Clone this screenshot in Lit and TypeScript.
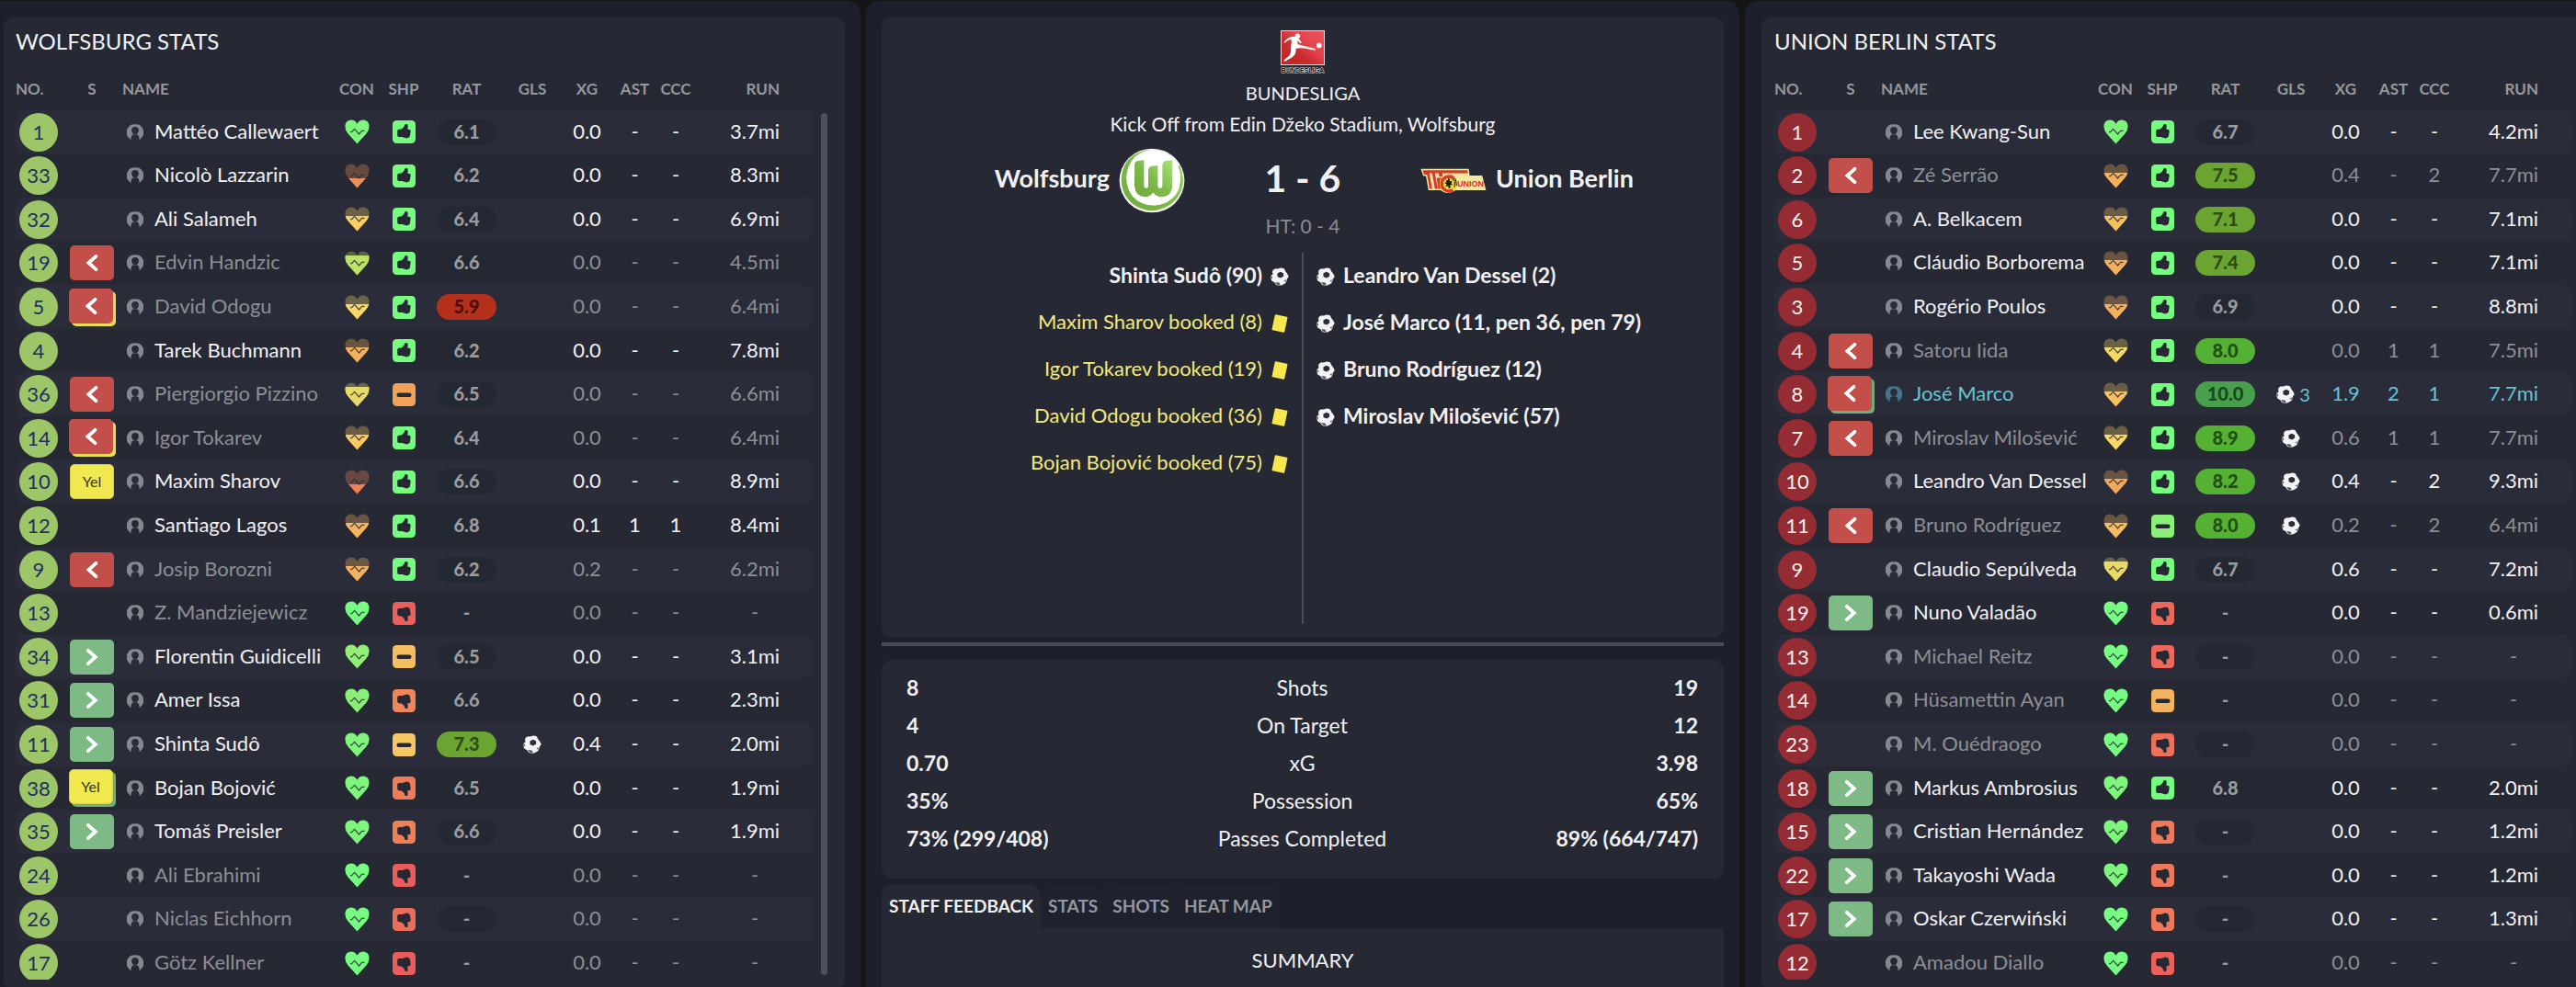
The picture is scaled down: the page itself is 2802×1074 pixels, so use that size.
import { LitElement, html, css, svg, nothing } from "lit";
import { customElement, property, state } from "lit/decorators.js";
import { classMap } from "lit/directives/class-map.js";

type Mark = "" | "off" | "on" | "yel" | "off-yel" | "off-on" | "yel-on";
type Shape = "up" | "flat" | "down";

interface Player {
  no: number;
  mark: Mark;
  name: string;
  heart: string;
  drained: number;
  shape: Shape;
  shapeColor: string;
  rating: string;
  goals: number;
  xg: string;
  assists: string;
  chances: string;
  run: string;
  tone: string;
}

const GREEN = "#76fc7e";

function player(
  no: number, mark: Mark, name: string, heart: string, drained: number,
  shape: Shape, shapeColor: string, rating: string, goals: number,
  xg: string, assists: string, chances: string, run: string, tone = "",
): Player {
  return { no, mark, name, heart, drained, shape, shapeColor, rating, goals, xg, assists, chances, run, tone };
}

const WOLFSBURG: Player[] = [
  player(1, "", "Mattéo Callewaert", "#7ef57c", 0, "up", GREEN, "6.1", 0, "0.0", "-", "-", "3.7mi"),
  player(33, "", "Nicolò Lazzarin", "#f09058", 16, "up", GREEN, "6.2", 0, "0.0", "-", "-", "8.3mi"),
  player(32, "", "Ali Salameh", "#f8cf60", 10, "up", GREEN, "6.4", 0, "0.0", "-", "-", "6.9mi"),
  player(19, "off", "Edvin Handzic", "#bde268", 5, "up", GREEN, "6.6", 0, "0.0", "-", "-", "4.5mi", "dim"),
  player(5, "off-yel", "David Odogu", "#f8d764", 10, "up", GREEN, "5.9", 0, "0.0", "-", "-", "6.4mi", "dim"),
  player(4, "", "Tarek Buchmann", "#f5b05c", 10, "up", GREEN, "6.2", 0, "0.0", "-", "-", "7.8mi"),
  player(36, "off", "Piergiorgio Pizzino", "#e9da66", 5, "flat", "#f1a258", "6.5", 0, "0.0", "-", "-", "6.6mi", "dim"),
  player(14, "off-yel", "Igor Tokarev", "#f8cb62", 10, "up", GREEN, "6.4", 0, "0.0", "-", "-", "6.4mi", "dim"),
  player(10, "yel", "Maxim Sharov", "#f0815a", 16, "up", GREEN, "6.6", 0, "0.0", "-", "-", "8.9mi"),
  player(12, "", "Santiago Lagos", "#f5b45e", 10, "up", GREEN, "6.8", 0, "0.1", "1", "1", "8.4mi"),
  player(9, "off", "Josip Borozni", "#f3b15e", 10, "up", GREEN, "6.2", 0, "0.2", "-", "-", "6.2mi", "dim"),
  player(13, "", "Z. Mandziejewicz", "#76fc80", 0, "down", "#ec605a", "-", 0, "0.0", "-", "-", "-", "dim"),
  player(34, "on", "Florentin Guidicelli", "#93ee75", 0, "flat", "#f4c05f", "6.5", 0, "0.0", "-", "-", "3.1mi"),
  player(31, "on", "Amer Issa", "#8aef76", 0, "down", "#ee865a", "6.6", 0, "0.0", "-", "-", "2.3mi"),
  player(11, "on", "Shinta Sudô", "#80f47c", 0, "flat", "#f6c863", "7.3", 1, "0.4", "-", "-", "2.0mi"),
  player(38, "yel-on", "Bojan Bojović", "#7cf77a", 0, "down", "#ee7c58", "6.5", 0, "0.0", "-", "-", "1.9mi"),
  player(35, "on", "Tomáš Preisler", "#7cf77a", 0, "down", "#ee8058", "6.6", 0, "0.0", "-", "-", "1.9mi"),
  player(24, "", "Ali Ebrahimi", "#76fc80", 0, "down", "#ec5c5a", "-", 0, "0.0", "-", "-", "-", "dim"),
  player(26, "", "Niclas Eichhorn", "#76fc80", 0, "down", "#ec6c5a", "-", 0, "0.0", "-", "-", "-", "dim"),
  player(17, "", "Götz Kellner", "#76fc80", 0, "down", "#ec5c5a", "-", 0, "0.0", "-", "-", "-", "dim"),
];

const UNION: Player[] = [
  player(1, "", "Lee Kwang-Sun", "#7ef57c", 0, "up", GREEN, "6.7", 0, "0.0", "-", "-", "4.2mi"),
  player(2, "off", "Zé Serrão", "#f3b15e", 10, "up", GREEN, "7.5", 0, "0.4", "-", "2", "7.7mi", "dim"),
  player(6, "", "A. Belkacem", "#f5c060", 10, "up", GREEN, "7.1", 0, "0.0", "-", "-", "7.1mi"),
  player(5, "", "Cláudio Borborema", "#f3b15e", 10, "up", GREEN, "7.4", 0, "0.0", "-", "-", "7.1mi"),
  player(3, "", "Rogério Poulos", "#f3b15e", 10, "up", GREEN, "6.9", 0, "0.0", "-", "-", "8.8mi"),
  player(4, "off", "Satoru Iida", "#f6da64", 10, "up", GREEN, "8.0", 0, "0.0", "1", "1", "7.5mi", "dim"),
  player(8, "off-on", "José Marco", "#f5c060", 10, "up", GREEN, "10.0", 3, "1.9", "2", "1", "7.7mi", "star"),
  player(7, "off", "Miroslav Milošević", "#f8d764", 10, "up", GREEN, "8.9", 1, "0.6", "1", "1", "7.7mi", "dim"),
  player(10, "", "Leandro Van Dessel", "#f1a85c", 10, "up", GREEN, "8.2", 1, "0.4", "-", "2", "9.3mi"),
  player(11, "off", "Bruno Rodríguez", "#f5bc5e", 10, "flat", "#8af07a", "8.0", 1, "0.2", "-", "2", "6.4mi", "dim"),
  player(9, "", "Claudio Sepúlveda", "#e9da66", 5, "up", GREEN, "6.7", 0, "0.6", "-", "-", "7.2mi"),
  player(19, "on", "Nuno Valadão", "#76fc80", 0, "down", "#ec685a", "-", 0, "0.0", "-", "-", "0.6mi"),
  player(13, "", "Michael Reitz", "#76fc80", 0, "down", "#ec685a", "-", 0, "0.0", "-", "-", "-", "dim"),
  player(14, "", "Hüsamettin Ayan", "#76fc80", 0, "flat", "#f3b35e", "-", 0, "0.0", "-", "-", "-", "dim"),
  player(23, "", "M. Ouédraogo", "#76fc80", 0, "down", "#ec705a", "-", 0, "0.0", "-", "-", "-", "dim"),
  player(18, "on", "Markus Ambrosius", "#7cf77a", 0, "up", GREEN, "6.8", 0, "0.0", "-", "-", "2.0mi"),
  player(15, "on", "Cristian Hernández", "#7cf77a", 0, "down", "#ee785a", "-", 0, "0.0", "-", "-", "1.2mi"),
  player(22, "on", "Takayoshi Wada", "#7cf77a", 0, "down", "#ee785a", "-", 0, "0.0", "-", "-", "1.2mi"),
  player(17, "on", "Oskar Czerwiński", "#76fc80", 0, "down", "#ee785a", "-", 0, "0.0", "-", "-", "1.3mi"),
  player(12, "", "Amadou Diallo", "#76fc80", 0, "down", "#ec605a", "-", 0, "0.0", "-", "-", "-", "dim"),
];

const base = css`
  :host {
    font-family: Lato, "Liberation Sans", sans-serif;
    color: #f1f1f3;
  }
  *, *::before, *::after {
    box-sizing: border-box;
  }
  h2, p, ul, dl, dd, dt {
    margin: 0;
    padding: 0;
    font-weight: 400;
  }
  svg {
    display: block;
  }
`;

const ball = html`
  <svg class="ball" viewBox="0 0 20 20" width="20" height="20" aria-label="Goal" role="img">
    <path fill="#f3f3f5" d="M6.2 1.2 Q8 2 9.8.8 Q12.6.2 15 1.6 L16.2 4.2 Q18 6 19.6 9.2 Q19.6 11.4 18 12.2 Q17.6 15.4 16.2 17.2 L12 19.6 H7.6 Q5.4 18.8 4.6 16.4 L1.2 14.4 Q.2 11.8.4 9 L2.6 7.2 Q1.6 5 2.4 3.2 Q4 1.4 6.2 1.2Z"/>
    <path fill="#2b2d38" d="M10.6 4.8 L14 6.2 L14.2 9.6 L11.2 11.6 L7.6 10.2 L7.4 6.6Z"/>
    <path fill="#595b65" d="M5.4 16 L9.6 16.4 L10.6 19 L7.6 19 Q6 18.2 5.4 16Z M.4 9 L2.2 10.2 L1.6 12.8 Q.4 11 .4 9Z M14.4 14.4 L17 13.2 L16.4 15.8Z"/>
  </svg>`;

const person = html`
  <svg class="person" viewBox="0 0 18 18" width="18" height="18" aria-hidden="true">
    <path fill="currentColor" fill-rule="evenodd" d="M9 .4 A8.6 8.6 0 0 1 15.4 15.4 L13.6 17.4 Q13.8 12.2 10.8 10.9 Q12.9 9.6 12.9 6.9 A3.9 4 0 0 0 5.1 6.9 Q5.1 9.6 7.2 10.9 Q4.2 12.2 4.4 17.4 L2.6 15.4 A8.6 8.6 0 0 1 9 .4Z"/>
    <path fill="currentColor" d="M6.6 11 Q9 12.6 11.4 11 L12 12 Q9 10.4 6 12Z"/>
  </svg>`;

function heartIcon(color: string, drained: number) {
  const d = "M13.5 26.4 L3.6 15.4 Q.4 12 .4 7.6 Q.6 1 6.6.4 Q11.6.4 13.5 4.8 Q15.4.4 20.4.4 Q26.4 1 26.6 7.6 Q26.6 12 23.4 15.4Z";
  return html`
    <svg class="heart" viewBox="0 0 27 27" width="27" height="27" aria-hidden="true">
      <path d=${d} fill=${color} opacity=${drained ? 0.32 : 1} />
      ${drained
        ? svg`<svg x="0" y=${drained} width="27" height=${27 - drained} viewBox=${`0 ${drained} 27 ${27 - drained}`}><path d=${d} fill=${color} /></svg>`
        : nothing}
      <path d="M6 13.6 H7.6 L10.6 10.4 L15.6 16 L18.6 12.4 H21.6" fill="none" stroke="#292b38" stroke-width="1.2" opacity=".85" />
    </svg>`;
}

function shapeIcon(shape: Shape, color: string) {
  const hand = "M6.4 9.8 L9.4 9.4 Q12.6 7.4 13 4.6 Q14.6 3.4 16 4.6 Q16.6 6.4 15.8 9.4 L18.4 10 Q19.6 10.8 19.2 12.6 L18.4 17.6 Q17.4 19.4 15 19.4 L10 18 L6.2 18 Q4.8 17.6 4.8 16 V11.4 Q5 10 6.4 9.8Z";
  return html`
    <svg class="shape" viewBox="0 0 25 25" width="25" height="25" aria-hidden="true">
      <rect width="25" height="25" rx="4.5" fill=${color} />
      ${shape === "flat"
        ? svg`<rect x="4.5" y="10.4" width="16" height="4.6" rx="2.2" fill="#262833" />`
        : svg`<path d=${hand} fill="#262833" transform=${shape === "down" ? "matrix(1 0 0 -1 .4 25)" : "translate(.4 0)"} />`}
    </svg>`;
}

const chevron = (dir: string) => html`
  <svg viewBox="0 0 14 20" width="14" height="20" aria-hidden="true">
    <path d=${dir === "off" ? "M11.4 2.8 L3.4 10 L11.4 17.2" : "M2.8 2.8 L10.8 10 L2.8 17.2"}
      fill="none" stroke="#fff" stroke-width="3.8" stroke-linecap="round" />
  </svg>`;

@customElement("team-table")
export class TeamTable extends LitElement {
  @property() heading = "";
  @property() kit = "home";
  @property({ attribute: false }) players: Player[] = [];
  @property({ type: Boolean }) bar = false;

  static styles = [base, css`
    :host {
      display: block;
      min-width: 0;
    }
    .card {
      background: #262934;
      border-radius: 12px;
      padding: 12px 19px 12px 13px;
    }
    .card.away {
      border-radius: 12px 0 0 12px;
      padding: 12px 4px 12px 14px;
    }
    h2 {
      font-size: 24px;
      line-height: 30px;
      margin-bottom: 12px;
    }
    .frame {
      display: flex;
      gap: 8px;
      height: calc(100vh - 80px);
    }
    .scroll {
      flex: 1;
      min-width: 0;
      overflow-y: auto;
      scrollbar-width: none;
    }
    .track {
      width: 7px;
      margin: 51px 0 5px;
      border-radius: 4px;
      background: #4e505b;
    }
    table {
      width: 100%;
      table-layout: fixed;
      border-collapse: separate;
      border-spacing: 0;
    }
    th, td {
      padding: 0;
      text-align: center;
      font-weight: 400;
      white-space: nowrap;
    }
    thead th {
      position: sticky;
      top: 0;
      z-index: 1;
      height: 48px;
      background: #262934;
      font-size: 17px;
      font-weight: 700;
      color: #96979c;
    }
    .no { width: 50px; }
    .s { width: 66px; }
    .con { width: 48px; }
    .shp { width: 54px; }
    .rat { width: 83px; }
    .gls { width: 60px; }
    .xg { width: 59px; }
    .ast { width: 45px; }
    .ccc { width: 44px; }
    .run { width: 128px; }
    thead .no, thead .name {
      text-align: left;
    }
    thead .run {
      text-align: right;
      padding-right: 37px;
    }
    tbody tr {
      height: 48px;
      font-size: 22px;
      line-height: 24px;
    }
    tbody tr:nth-child(5n + 1), tbody tr:nth-child(5n + 3) {
      height: 47px;
    }
    tbody tr:nth-child(odd) > * {
      background: #2a2d39;
    }
    tbody tr > :first-child {
      border-radius: 10px 0 0 10px;
    }
    tbody tr > :last-child {
      border-radius: 0 10px 10px 0;
    }
    .value, .who span {
      padding-bottom: 2px;
    }
    .dim {
      color: #8d8f95;
    }
    .star {
      color: #68c3d3;
    }
    .shirt {
      display: grid;
      place-items: center;
      width: 42px;
      height: 42px;
      margin: 0 4px;
      border-radius: 50%;
      background: #9dc669;
      color: #1f2f63;
    }
    .away .shirt {
      background: #952b33;
      color: #f3f1f2;
    }
    .who {
      display: flex;
      align-items: center;
      gap: 12px;
      padding-left: 5px;
    }
    .person {
      flex: none;
      color: #86888f;
    }
    .star .person {
      color: #43788a;
    }
    .badge {
      display: grid;
      place-items: center;
      width: 48px;
      height: 38px;
      margin: 0 auto;
      border-radius: 5px;
      font-size: 16px;
      line-height: 20px;
    }
    .off { background: #c24f49; }
    .on { background: #7dba86; }
    .yel {
      background: #efe84f;
      border: 1px solid #d6cd42;
      color: #33321f;
    }
    .stack {
      padding: 0 3px 3px 0;
    }
    .over-yel { box-shadow: 3px 3px 0 #e9df4d; }
    .over-on { box-shadow: 3px 3px 0 #6fae7c; }
    .heart, .shape {
      margin: 0 auto;
    }
    .pill {
      width: 65px;
      height: 28px;
      margin: 0 auto;
      border-radius: 14px;
      background: #242833;
      color: #999b9f;
      font-size: 20px;
      font-weight: 900;
      line-height: 27px;
    }
    .poor { background: #b5301b; color: #4f0d06; }
    .good { background: #6ba430; color: #2f4c12; }
    .great { background: #55b133; color: #1f5010; }
    .perfect { background: #48a04c; color: #174a1d; }
    .goals {
      display: flex;
      justify-content: center;
      align-items: center;
      gap: 5px;
      font-size: 20px;
    }
    .goals.many {
      padding-left: 5px;
    }
  `];

  private ratingClass(rating: string) {
    const value = Number(rating);
    return {
      pill: true,
      poor: value < 6,
      good: value >= 7 && value < 8,
      great: value >= 8 && value < 10,
      perfect: value >= 10,
    };
  }

  private badge(mark: Mark) {
    if (!mark) return nothing;
    const [top, under] = mark.split("-");
    const classes = { badge: true, [top]: true, [`over-${under}`]: Boolean(under) };
    return html`
      <div class=${under ? "stack" : ""}>
        <div class=${classMap(classes)}>${top === "yel" ? "Yel" : chevron(top)}</div>
      </div>`;
  }

  private goals(count: number) {
    if (!count) return nothing;
    return count > 1
      ? html`<div class="goals many">${ball}<span>${count}</span></div>`
      : html`<div class="goals">${ball}</div>`;
  }

  private row(p: Player) {
    return html`
      <tr class=${p.tone}>
        <td><div class="shirt">${p.no}</div></td>
        <td>${this.badge(p.mark)}</td>
        <th scope="row"><div class="who">${person}<span>${p.name}</span></div></th>
        <td>${heartIcon(p.heart, p.drained)}</td>
        <td>${shapeIcon(p.shape, p.shapeColor)}</td>
        <td><div class=${classMap(this.ratingClass(p.rating))}>${p.rating}</div></td>
        <td>${this.goals(p.goals)}</td>
        <td class="value">${p.xg}</td>
        <td class="value">${p.assists}</td>
        <td class="value">${p.chances}</td>
        <td class="value">${p.run}</td>
      </tr>`;
  }

  render() {
    return html`
      <section class="card ${this.kit}">
        <h2>${this.heading}</h2>
        <div class="frame">
          <div class="scroll">
            <table>
              <thead>
                <tr>
                  <th class="no">NO.</th>
                  <th class="s">S</th>
                  <th class="name">NAME</th>
                  <th class="con">CON</th>
                  <th class="shp">SHP</th>
                  <th class="rat">RAT</th>
                  <th class="gls">GLS</th>
                  <th class="xg">XG</th>
                  <th class="ast">AST</th>
                  <th class="ccc">CCC</th>
                  <th class="run">RUN</th>
                </tr>
              </thead>
              <tbody>${this.players.map((p) => this.row(p))}</tbody>
            </table>
          </div>
          ${this.bar ? html`<div class="track"></div>` : nothing}
        </div>
      </section>`;
  }
}

const leagueLogo = html`
  <svg viewBox="0 0 48 48" width="48" height="48" role="img" aria-label="League">
    <defs>
      <linearGradient id="league" x1="0" y1="1" x2="1" y2="0">
        <stop offset="0" stop-color="#bf2323" />
        <stop offset=".4" stop-color="#cb2c2e" />
        <stop offset=".6" stop-color="#e4434c" />
        <stop offset="1" stop-color="#ec5560" />
      </linearGradient>
    </defs>
    <rect x=".5" y=".5" width="47" height="37" fill="url(#league)" stroke="#efd5d8" />
    <circle cx="18.4" cy="6.2" r="2.7" fill="#fff" />
    <circle cx="41.8" cy="16.4" r="2.8" fill="#fff" />
    <path fill="#fff" transform="translate(0 .6) scale(1 1.04)" d="M19.4 7.8 Q16 5.4 12 6.2 Q7 7 3.4 12 L4.8 12.6 Q8 8.8 11.6 9 Q12.4 11 11.2 15 L11 22 Q10.4 26 6.4 28.2 L3.6 30.6 Q3.6 32.4 5 32 L8 30 Q14 27.6 15.6 24.4 Q17 21 16.6 18.4 Q24 17 33 19.6 L37.6 20.4 L38.4 18.8 Q30 16.8 18.8 14 Q18.2 11 17.6 9.8 L21.6 13.2 L22.8 12.2Z" />
    <text x="24" y="46" text-anchor="middle" font-family="Liberation Sans, sans-serif" font-weight="700"
      font-size="7" fill="#0b0b0b" stroke="#d9d9d9" stroke-width="1.2" paint-order="stroke">BUNDESLIGA</text>
  </svg>`;

const wolfsburgCrest = html`
  <svg viewBox="0 0 72 68" width="72" height="71" preserveAspectRatio="none" role="img" aria-label="Wolfsburg crest">
    <defs>
      <linearGradient id="leaf" x1="0" y1="1" x2="1" y2="0">
        <stop offset="0" stop-color="#6fa93a" />
        <stop offset=".5" stop-color="#7dbb4a" />
        <stop offset="1" stop-color="#a8e878" />
      </linearGradient>
    </defs>
    <ellipse cx="36" cy="34" rx="35.4" ry="33.4" fill="#f4f4f4" />
    <path fill="url(#leaf)" d="M34 2 Q10 4 4 24 Q-1 46 16 59 Q34 71 54 60 Q70 50 70 33 Q70 24 64 16 Q69 26 67 37 Q63 57 40 59.6 Q18 60 11 44 Q4 24 17 9.6 Q24 4 34 2Z" />
    <ellipse cx="37.6" cy="31.4" rx="29.4" ry="28.4" fill="#fff" />
    <path fill="none" stroke="url(#leaf)" stroke-width="1.6" d="M65.6 19 Q69.6 29 67 40" />
    <path fill="url(#leaf)" d="M17 17.4 Q17.4 13.6 22 13.2 L27.4 12.8 V39 Q27.4 42 29.8 42 Q32 41.8 32 39 V24 Q32 19.4 36 18.8 L42.4 18.2 V39 Q42.6 42 45 42 Q47.4 41.8 47.4 39 V19 Q47.4 13.8 52 13.2 L58.2 12.6 V38.6 Q58 50.4 46.6 51 Q40.6 50.8 37.4 46.4 Q34 51 28.6 51 Q17.4 50.4 17 38.6Z" />
  </svg>`;

const unionCrest = html`
  <svg viewBox="0 0 72 28" width="72" height="28" role="img" aria-label="Union Berlin crest">
    <path fill="#f4e9a0" d="M.4.8 H52.6 L53.6 8 H67.2 L71.4 24 H38 Q34 27.6 29 27 Q25 26.6 22 24 H8.8 L6 8.4 H3.2Z" />
    <path fill="#d63a2e" d="M2.4 2.2 H51.2 L51.8 5.4 H23.6 L24.2 9.2 H20.4 L19.8 5.4 H15.8 L18.8 22.6 H15.8 L12.8 5.4 H9.8 L12.8 22.6 H10 L7.2 7 H4Z" />
    <path fill="#d63a2e" d="M20.6 10.6 H25.6 L26 13 H21 L22.4 22.6 H19.4 L17.6 10.6Z" />
    <circle cx="30.6" cy="17" r="9.8" fill="#f2dc3c" />
    <path fill="none" stroke="#d63a2e" stroke-width="3.4" d="M36.4 11 A8 8 0 1 0 35.4 23.8" />
    <path fill="#1b1b12" d="M30 10.4 L32.2 12 L31.6 14.4 L34.8 13.4 L33.6 16 L35 18.6 L32.6 18 L32.6 21.8 L30.6 21.8 L30.2 19 L27.4 20.6 L28.6 17 L26 16.8 L28.6 14.8 L27.6 12.8 L30 13.2Z" />
    <path fill="none" stroke="#1b1b12" stroke-width="1" d="M34.8 12.4 L37.6 11.4 M36 14 L39 12 M37 21 L37.4 14.4 M39.4 19 L38.6 13" />
    <text x="40" y="20" font-family="Liberation Sans, sans-serif" font-weight="700"
      font-size="9" fill="#d8322f">UNION</text>
  </svg>`;

const card = html`
  <svg class="booking" viewBox="0 0 20 20" width="20" height="20" role="img" aria-label="Yellow card">
    <rect x="3" y="1.4" width="14" height="17.4" rx="1" fill="#f7e64e" transform="rotate(12 10 10)" />
  </svg>`;

const HOME_EVENTS = [
  { text: "Shinta Sudô (90)", goal: true },
  { text: "Maxim Sharov booked (8)", goal: false },
  { text: "Igor Tokarev booked (19)", goal: false },
  { text: "David Odogu booked (36)", goal: false },
  { text: "Bojan Bojović booked (75)", goal: false },
];

const AWAY_EVENTS = [
  { text: "Leandro Van Dessel (2)", goal: true },
  { text: "José Marco (11, pen 36, pen 79)", goal: true },
  { text: "Bruno Rodríguez (12)", goal: true },
  { text: "Miroslav Milošević (57)", goal: true },
];

const MATCH_STATS = [
  ["8", "Shots", "19"],
  ["4", "On Target", "12"],
  ["0.70", "xG", "3.98"],
  ["35%", "Possession", "65%"],
  ["73% (299/408)", "Passes Completed", "89% (664/747)"],
];

const TABS = ["STAFF FEEDBACK", "STATS", "SHOTS", "HEAT MAP"];

@customElement("match-centre")
export class MatchCentre extends LitElement {
  @state() private tab = 0;

  static styles = [base, css`
    :host {
      display: flex;
      flex-direction: column;
      min-width: 0;
    }
    .card {
      flex: none;
      background: #262934;
      border-radius: 12px;
    }
    .match {
      display: flex;
      flex-direction: column;
      align-items: center;
      padding: 15px 0;
    }
    .line {
      font-size: 21px;
      line-height: 34px;
    }
    .league {
      margin-top: 3px;
      font-size: 20px;
    }
    .teams {
      display: grid;
      grid-template-columns: minmax(0, 1fr) 256px minmax(0, 1fr);
      align-items: center;
      align-self: stretch;
      height: 71px;
      margin-top: 9px;
      font-size: 27px;
      font-weight: 700;
      line-height: 32px;
    }
    .team {
      display: flex;
      align-items: center;
      gap: 10px;
    }
    .team.home {
      justify-content: flex-end;
    }
    .team span, .score {
      padding-bottom: 6px;
    }
    .score {
      text-align: center;
      font-size: 41px;
      line-height: 48px;
    }
    .half {
      line-height: 28px;
      color: #8a8c93;
    }
    .events {
      display: grid;
      grid-template-columns: minmax(0, 1fr) 2px minmax(0, 1fr);
      align-self: stretch;
      min-height: 404px;
      margin-top: 15px;
    }
    .rule {
      background: #4a4c57;
    }
    ul {
      list-style: none;
      display: flex;
      flex-direction: column;
      padding: 0 14px;
    }
    .event {
      display: flex;
      align-items: center;
      gap: 9px;
      height: 51px;
      font-size: 22px;
      line-height: 28px;
      color: #f3ea7c;
    }
    .event span {
      padding-bottom: 3px;
    }
    .home .event {
      flex-direction: row-reverse;
    }
    .event.goal {
      font-size: 23px;
      font-weight: 700;
      color: #f1f1f3;
    }
    .divider {
      flex: none;
      height: 4px;
      margin: 5px 0 15px;
      background: #494b56;
    }
    .stats {
      display: flex;
      flex-direction: column;
      padding: 9px 28px 24px 27px;
    }
    .stat {
      display: grid;
      grid-template-columns: minmax(0, 1fr) auto minmax(0, 1fr);
      align-items: center;
      height: 41px;
      font-size: 23px;
      line-height: 28px;
    }
    .stat dd {
      font-weight: 700;
    }
    .stat dd:last-child {
      text-align: right;
    }
    .tabs {
      flex: none;
      display: flex;
      margin-top: 6px;
    }
    button {
      height: 48px;
      margin: 0;
      padding: 0 8px;
      border: 0;
      border-radius: 12px 12px 0 0;
      background: #1f212e;
      color: #96979c;
      font: 700 19px/24px Lato, "Liberation Sans", sans-serif;
      cursor: pointer;
    }
    button[aria-selected="true"] {
      background: #262934;
      color: #f1f1f3;
    }
    .summary {
      flex: 1;
      padding-top: 20px;
      background: #262934;
      text-align: center;
    }
    .summary h2 {
      font-size: 22px;
      line-height: 30px;
    }
  `];

  private events(list: { text: string; goal: boolean }[], side: string) {
    return html`
      <ul class=${side}>
        ${list.map((e) => html`
          <li class=${classMap({ event: true, goal: e.goal })}>
            ${e.goal ? ball : card}<span>${e.text}</span>
          </li>`)}
      </ul>`;
  }

  render() {
    return html`
      <section class="card match">
        ${leagueLogo}
        <p class="line league">BUNDESLIGA</p>
        <p class="line">Kick Off from Edin Džeko Stadium, Wolfsburg</p>
        <div class="teams">
          <div class="team home"><span>Wolfsburg</span>${wolfsburgCrest}</div>
          <div class="score">1 - 6</div>
          <div class="team">${unionCrest}<span>Union Berlin</span></div>
        </div>
        <p class="line half">HT: 0 - 4</p>
        <div class="events">
          ${this.events(HOME_EVENTS, "home")}
          <div class="rule"></div>
          ${this.events(AWAY_EVENTS, "away")}
        </div>
      </section>
      <div class="divider"></div>
      <dl class="card stats">
        ${MATCH_STATS.map(([home, label, away]) => html`
          <div class="stat"><dd>${home}</dd><dt>${label}</dt><dd>${away}</dd></div>`)}
      </dl>
      <div class="tabs" role="tablist">
        ${TABS.map((label, i) => html`
          <button type="button" role="tab" aria-selected=${this.tab === i ? "true" : "false"}
            @click=${() => { this.tab = i; }}>${label}</button>`)}
      </div>
      <section class="summary"><h2>SUMMARY</h2></section>`;
  }
}

@customElement("app-root")
export class AppRoot extends LitElement {
  static styles = [base, css`
    :host {
      display: block;
      height: 100vh;
      overflow: hidden;
      background: #151515;
    }
    .page {
      display: grid;
      grid-template-columns: minmax(0, 936fr) minmax(0, 950fr) minmax(0, 904fr);
      gap: 6px;
      height: 100%;
      padding-top: 1px;
    }
    .panel {
      display: grid;
      min-height: 0;
      border-radius: 14px 14px 0 0;
      background: #1d1f2d;
      padding: 17px 17px 0;
    }
    .left {
      padding-left: 4px;
      border-top-left-radius: 0;
    }
    .right {
      padding: 17px 0 0 18px;
      border-top-right-radius: 0;
    }
  `];

  render() {
    return html`
      <main class="page">
        <div class="panel left">
          <team-table heading="WOLFSBURG STATS" kit="home" bar .players=${WOLFSBURG}></team-table>
        </div>
        <div class="panel"><match-centre></match-centre></div>
        <div class="panel right">
          <team-table heading="UNION BERLIN STATS" kit="away" .players=${UNION}></team-table>
        </div>
      </main>`;
  }
}
